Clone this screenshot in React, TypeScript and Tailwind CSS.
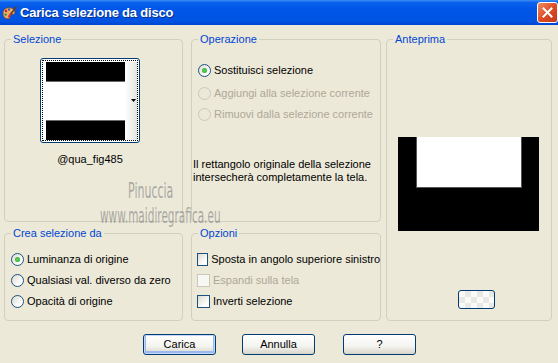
import type { ReactNode } from 'react'

function Group({ title, className, children }: { title: string; className?: string; children?: ReactNode }) {
  return (
    <fieldset className={`border border-[#D0D0BF] rounded-[4px] m-0 p-0 min-w-0 ${className ?? ''}`}>
      <legend className="ml-[6px] px-[2px] text-[#0046D5] leading-[13px]">{title}</legend>
      {children}
    </fieldset>
  )
}

function Radio({ label, checked, disabled }: { label: string; checked?: boolean; disabled?: boolean }) {
  return (
    <div className="flex items-center h-[13px]">
      <span
        className={`w-[13px] h-[13px] rounded-full border flex items-center justify-center ${
          disabled
            ? 'border-[#CAC8BB] bg-[#ECE9D8]'
            : 'border-[#1C5180] bg-[linear-gradient(135deg,#dcdad0,#ffffff_75%)]'
        }`}
      >
        {checked && <span className="w-[5px] h-[5px] rounded-full bg-[radial-gradient(circle,#62d862,#21a121)]" />}
      </span>
      <span className={`ml-[3px] whitespace-nowrap ${disabled ? 'text-[#ACA899]' : 'text-black'}`}>{label}</span>
    </div>
  )
}

function Check({ label, disabled }: { label: string; disabled?: boolean }) {
  return (
    <div className="flex items-center h-[13px]">
      <span
        className={`w-[13px] h-[13px] border ${
          disabled
            ? 'border-[#CAC8BB] bg-[#f7f7f3]'
            : 'border-[#1C5180] bg-[linear-gradient(135deg,#dcdad0,#ffffff_75%)]'
        }`}
      />
      <span className={`ml-[3px] whitespace-nowrap ${disabled ? 'text-[#ACA899]' : 'text-black'}`}>{label}</span>
    </div>
  )
}

function XpButton({ children, isDefault, className }: { children: ReactNode; isDefault?: boolean; className?: string }) {
  return (
    <button
      className={`w-[73px] h-[21px] rounded-[3px] border border-[#003C74] bg-[linear-gradient(to_bottom,#ffffff,#f3f3ef_60%,#d8d4c8)] text-[11px] text-black leading-none ${
        isDefault ? 'shadow-[inset_0_0_0_1px_#c7d7f8,inset_0_-1px_0_2px_#9bb8ee]' : ''
      } ${className ?? ''}`}
    >
      {children}
    </button>
  )
}

function PaletteIcon() {
  return (
    <svg width="15" height="15" viewBox="0 0 15 15">
      <path d="M2 4 C4 1 10 1 12 4 C14 7 12 9 10 8 C8 7 7 10 8 12 C6 14 1 12 1 8 C1 6 1.5 5 2 4 Z" fill="#f1a868" stroke="#8a4a1e" strokeWidth="0.8" />
      <circle cx="4" cy="5" r="1.2" fill="#d02020" />
      <circle cx="7" cy="3.6" r="1.1" fill="#2050d0" />
      <circle cx="3.6" cy="8.6" r="1.2" fill="#20a040" />
      <circle cx="10" cy="4.6" r="1" fill="#f0e020" />
      <path d="M14 1 L8 9" stroke="#604020" strokeWidth="1.6" strokeLinecap="round" />
      <path d="M8.4 8.4 L6.8 10.6" stroke="#e03030" strokeWidth="1.8" strokeLinecap="round" />
    </svg>
  )
}

export default function App() {
  return (
    <div className="relative w-[558px] h-[363px] overflow-hidden bg-[#ECE9D8] font-['Liberation_Sans',Arial,sans-serif] text-[11px] leading-[13px] text-black">
      {/* Title bar */}
      <div className="flex items-center h-[25px] bg-[linear-gradient(to_bottom,#3d8ff5_0%,#0a62ec_10%,#0056e7_35%,#0053e2_85%,#0044cf_100%)]">
        <div className="ml-[2px] mt-[1px]">
          <PaletteIcon />
        </div>
        <span className="ml-[3px] text-white font-bold text-[13px] tracking-[-0.2px] [text-shadow:1px_1px_0_#0a2f8a]">
          Carica selezione da disco
        </span>
        <div className="ml-auto w-[21px] h-[21px] rounded-[3px] border border-white bg-[linear-gradient(135deg,#f08a64,#dc4a22_55%,#c2381a)] flex items-center justify-center">
          <svg width="11" height="11" viewBox="0 0 11 11">
            <path d="M1.5 1.5 L9.5 9.5 M9.5 1.5 L1.5 9.5" stroke="white" strokeWidth="2" strokeLinecap="square" />
          </svg>
        </div>
      </div>

      {/* Groups */}
      <div className="flex pl-[4px] pt-[8px]">
        <div className="flex flex-col w-[179px]">
          <Group title="Selezione" className="h-[189px]">
            <div className="ml-[35px] mt-[12px] w-[100px]">
              <div className="h-[85px] rounded-[3px] border border-[#003C74] bg-white p-[1px]">
                <div className="h-full border border-dotted border-black pt-[1px] pl-[3px] flex">
                  <div className="w-[79px] h-[78px] flex flex-col bg-black">
                    <div className="h-[20px] border-b border-[#6a6a6a]" />
                    <div className="h-[38px] bg-white" />
                    <div className="h-[20px] border-t border-[#6a6a6a]" />
                  </div>
                  <div className="w-[12px] h-[78px] bg-[linear-gradient(to_right,#ffffff,#e4e4e0)] flex items-center justify-end pr-[1px]">
                    <svg width="5" height="3" viewBox="0 0 5 3" className="mt-[-2px]">
                      <path d="M0 0 H5 L2.5 3 Z" fill="black" />
                    </svg>
                  </div>
                </div>
              </div>
              <div className="mt-[10px] text-center">@qua_fig485</div>
            </div>
          </Group>
          <Group title="Crea selezione da" className="h-[94px] mt-[5px]">
            <div className="ml-[6px] mt-[13px] flex flex-col gap-[8px]">
              <Radio label="Luminanza di origine" checked />
              <Radio label="Qualsiasi val. diverso da zero" />
              <Radio label="Opacità di origine" />
            </div>
          </Group>
        </div>

        <div className="flex flex-col w-[190px] ml-[8px]">
          <Group title="Operazione" className="h-[189px]">
            <div className="ml-[6px] mt-[18px]">
              <Radio label="Sostituisci selezione" checked />
              <div className="mt-[10px]">
                <Radio label="Aggiungi alla selezione corrente" disabled />
              </div>
              <div className="mt-[8px]">
                <Radio label="Rimuovi dalla selezione corrente" disabled />
              </div>
            </div>
            <p className="mt-[37px] pl-[1px]">
              Il rettangolo originale della selezione
              <br />
              intersecherà completamente la tela.
            </p>
          </Group>
          <Group title="Opzioni" className="h-[94px] mt-[5px]">
            <div className="ml-[5px] mt-[13px] flex flex-col gap-[8px]">
              <Check label="Sposta in angolo superiore sinistro" />
              <Check label="Espandi sulla tela" disabled />
              <Check label="Inverti selezione" />
            </div>
          </Group>
        </div>

        <Group title="Anteprima" className="w-[166px] h-[288px] ml-[5px]">
          <div className="ml-[11px] mt-[91px] w-[141px] h-[94px] bg-black pl-[18px]">
            <div className="w-[106px] h-[51px] bg-white border-x border-b border-[#555]" />
          </div>
          <div className="ml-[71px] mt-[59px] w-[37px] h-[19px] rounded-[3px] border border-[#003C74] bg-[conic-gradient(#e8e8e4_25%,#fafaf8_0_50%,#e8e8e4_0_75%,#fafaf8_0)] bg-[length:12px_12px]" />
        </Group>
      </div>

      {/* Buttons */}
      <div className="flex mt-[13px] ml-[143px]">
        <XpButton isDefault>Carica</XpButton>
        <XpButton className="ml-[26px]">Annulla</XpButton>
        <XpButton className="ml-[28px]">?</XpButton>
      </div>

      {/* Watermark */}
      <div className="absolute left-[128px] top-[180px] text-[22px] leading-[22px] text-[#8a8a8a]/70 font-['DejaVu_Sans',sans-serif] scale-x-[0.5] origin-left whitespace-nowrap">
        Pinuccia
      </div>
      <div className="absolute left-[100px] top-[206px] text-[21px] leading-[21px] text-[#8a8a8a]/70 font-['DejaVu_Sans',sans-serif] scale-x-[0.5] origin-left whitespace-nowrap">
        www.maidiregrafica.eu
      </div>
    </div>
  )
}
